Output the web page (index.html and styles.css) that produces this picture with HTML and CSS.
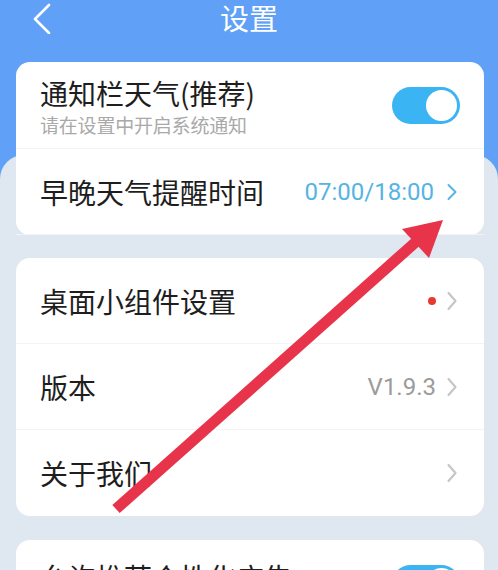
FILE: index.html
```html
<!DOCTYPE html>
<html lang="zh-CN">
<head>
<meta charset="utf-8">
<title>设置</title>
<link rel="stylesheet" href="styles.css">
</head>
<body>
<div class="page">
  <header class="nav">
    <span class="back">
      <svg width="20" height="32" viewBox="0 0 20 32"><polyline points="16,3 2,17 16,31" fill="none" stroke="#fff" stroke-width="2.6" stroke-linecap="round" stroke-linejoin="round"/></svg>
    </span>
    <h1 class="title">设置</h1>
    <span></span>
  </header>

  <section class="card card-top">
    <div class="row row-tall">
      <div class="texts">
        <div class="label">通知栏天气(推荐)</div>
        <div class="sub">请在设置中开启系统通知</div>
      </div>
      <div class="toggle"><span class="knob"></span></div>
    </div>
    <div class="row">
      <div class="label">早晚天气提醒时间</div>
      <div class="right">
        <span class="value blue">07:00/18:00</span>
        <svg class="chev" width="12" height="18" viewBox="0 0 12 18"><polyline points="2.5,2 9.5,9 2.5,16" fill="none" stroke="#56b3e4" stroke-width="2" stroke-linecap="round" stroke-linejoin="round"/></svg>
      </div>
    </div>
  </section>

  <main class="sheet">
    <section class="card">
      <div class="row">
        <div class="label">桌面小组件设置</div>
        <div class="right">
          <span class="dot"></span>
          <svg class="chev" width="12" height="20" viewBox="0 0 12 20"><polyline points="2.5,2 9.5,10 2.5,18" fill="none" stroke="#c6c6c6" stroke-width="2.2" stroke-linecap="round" stroke-linejoin="round"/></svg>
        </div>
      </div>
      <div class="row">
        <div class="label">版本</div>
        <div class="right">
          <span class="value gray">V1.9.3</span>
          <svg class="chev" width="12" height="20" viewBox="0 0 12 20"><polyline points="2.5,2 9.5,10 2.5,18" fill="none" stroke="#c6c6c6" stroke-width="2.2" stroke-linecap="round" stroke-linejoin="round"/></svg>
        </div>
      </div>
      <div class="row last">
        <div class="label">关于我们</div>
        <div class="right">
          <svg class="chev" width="12" height="20" viewBox="0 0 12 20"><polyline points="2.5,2 9.5,10 2.5,18" fill="none" stroke="#c6c6c6" stroke-width="2.2" stroke-linecap="round" stroke-linejoin="round"/></svg>
        </div>
      </div>
    </section>

    <section class="card card-gap">
      <div class="row row-tall last">
        <div class="texts">
          <div class="label">允许推荐个性化广告</div>
        </div>
        <div class="toggle"><span class="knob"></span></div>
      </div>
    </section>
  </main>

  <svg class="arrow" width="498" height="570" viewBox="0 0 498 570">
    <line x1="116" y1="509" x2="418" y2="240" stroke="#e8344b" stroke-width="11"/>
    <polygon points="443,220 402,229 429,258" fill="#e8344b"/>
  </svg>
</div>
</body>
</html>
```
FILE: styles.css
```css
* { box-sizing: border-box; }
html, body {
  margin: 0;
  padding: 0;
}
body {
  width: 498px;
  height: 570px;
  overflow: hidden;
  background: #dfe7f0;
  font-family: "Noto Sans CJK SC", "Noto Sans", sans-serif;
  color: #1e1e1e;
}
.page {
  position: relative;
  background: #60a0f6;
  height: 570px;
  overflow: hidden;
}
.nav {
  height: 36px;
  display: grid;
  grid-template-columns: 1fr auto 1fr;
  align-items: center;
}
.back {
  padding-left: 33px;
  display: flex;
  align-items: center;
  height: 36px;
}
.title {
  margin: 0;
  font-size: 29px;
  font-weight: 400;
  color: #fff;
  line-height: 36px;
  position: relative;
  top: -1px;
}
.card {
  background: #fff;
  border-radius: 14px;
  margin: 0 14px 0 16px;
}
.card-top {
  margin-top: 26px;
  position: relative;
  z-index: 1;
}
.sheet {
  margin-top: -80px;
  background: #dfe7f0;
  border-radius: 24px 24px 0 0;
  padding-top: 103px;
  padding-bottom: 40px;
}
.card-gap {
  margin-top: 24px;
}
.row {
  height: 86px;
  display: flex;
  align-items: center;
  justify-content: space-between;
  padding: 0 24px 0 24px;
  border-bottom: 1px solid #f2f3f5;
}
.row.last { border-bottom: none; }
.row-tall {
  height: 87px;
  padding-right: 24px;
}
.card-gap .row-tall {
  align-items: flex-start;
  padding-top: 16px;
}
.card-gap .toggle { margin-top: 9px; }
.texts {
  display: flex;
  flex-direction: column;
  padding-top: 4px;
}
.label {
  font-size: 28px;
  line-height: 34px;
  letter-spacing: 0;
}
.sub {
  font-size: 19px;
  line-height: 26px;
  color: #a9a9a9;
  letter-spacing: -0.2px;
  margin-top: 2px;
}
.right {
  display: flex;
  align-items: center;
  gap: 10px;
  padding-right: 2px;
}
.value {
  font-family: Roboto, "Noto Sans", sans-serif;
  font-size: 24px;
  line-height: 28px;
}
.blue { color: #56b3e4; }
.gray { color: #9b9b9b; }
.right .blue + .chev { margin-left: 2px; }
.chev { display: block; }
.dot {
  width: 8px;
  height: 8px;
  border-radius: 50%;
  background: #e8392f;
}
.toggle {
  width: 68px;
  height: 37px;
  border-radius: 19px;
  background: #3bb4f3;
  position: relative;
  flex: none;
}
.knob {
  position: absolute;
  right: 3px;
  top: 3px;
  width: 31px;
  height: 31px;
  border-radius: 50%;
  background: #fff;
}
.arrow {
  position: absolute;
  left: 0;
  top: 0;
  z-index: 5;
  pointer-events: none;
}
```
